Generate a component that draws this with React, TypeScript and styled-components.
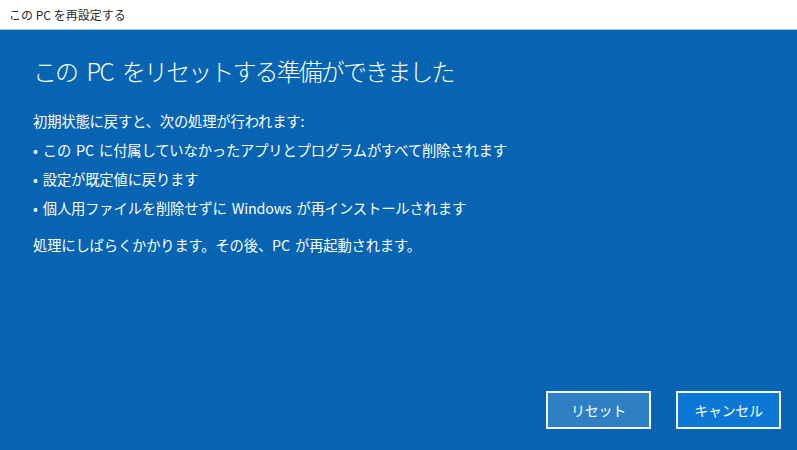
import styled, { createGlobalStyle } from 'styled-components';

const GlobalStyle = createGlobalStyle`
  html, body {
    margin: 0;
    padding: 0;
  }
  body {
    font-family: "Noto Sans CJK JP", "Noto Sans", sans-serif;
  }
`;

const Window = styled.div`
  width: 797px;
  height: 450px;
  display: flex;
  flex-direction: column;
  overflow: hidden;
`;

const TitleBar = styled.div`
  height: 30px;
  flex-shrink: 0;
  background: #ffffff;
  color: #2b2b2b;
  font-size: 12px;
  display: flex;
  align-items: center;
  padding-left: 9px;
  border-bottom: 1px solid #9cc3e4;
  box-sizing: border-box;
`;

const Panel = styled.div`
  flex: 1;
  background: #0664b3;
  color: #ffffff;
  display: flex;
  flex-direction: column;
  padding: 19px 16px 21px 33px;
`;

const Heading = styled.h1`
  margin: 0;
  font-size: 24px;
  font-weight: 300;
  line-height: 44px;
  letter-spacing: -1.9px;
  word-spacing: 6px;
`;

const Body = styled.div`
  margin-top: 13px;
  font-size: 14.3px;
  line-height: 29px;
  letter-spacing: -0.15px;
  word-spacing: 2px;
`;

const Line = styled.p`
  margin: 0;
`;

const Note = styled.p`
  margin: 8px 0 0;
`;

const Actions = styled.div`
  margin-top: auto;
  display: flex;
  justify-content: flex-end;
  gap: 25px;
`;

const Button = styled.button<{ $primary?: boolean }>`
  width: 105px;
  height: 38px;
  box-sizing: border-box;
  border: 2px solid #f2f6fb;
  background: ${(p) => (p.$primary ? '#0a78d4' : '#2f7fc4')};
  color: #ffffff;
  font-family: inherit;
  font-size: 14px;
  letter-spacing: -0.3px;
  cursor: pointer;
`;

const App = () => {
  return (
    <>
      <GlobalStyle />
      <Window>
        <TitleBar>この PC を再設定する</TitleBar>
        <Panel>
          <Heading>この PC をリセットする準備ができました</Heading>
          <Body>
            <Line>初期状態に戻すと、次の処理が行われます:</Line>
            <Line>• この PC に付属していなかったアプリとプログラムがすべて削除されます</Line>
            <Line>• 設定が既定値に戻ります</Line>
            <Line>• 個人用ファイルを削除せずに Windows が再インストールされます</Line>
            <Note>処理にしばらくかかります。その後、PC が再起動されます。</Note>
          </Body>
          <Actions>
            <Button>リセット</Button>
            <Button $primary>キャンセル</Button>
          </Actions>
        </Panel>
      </Window>
    </>
  );
};

export default App;
